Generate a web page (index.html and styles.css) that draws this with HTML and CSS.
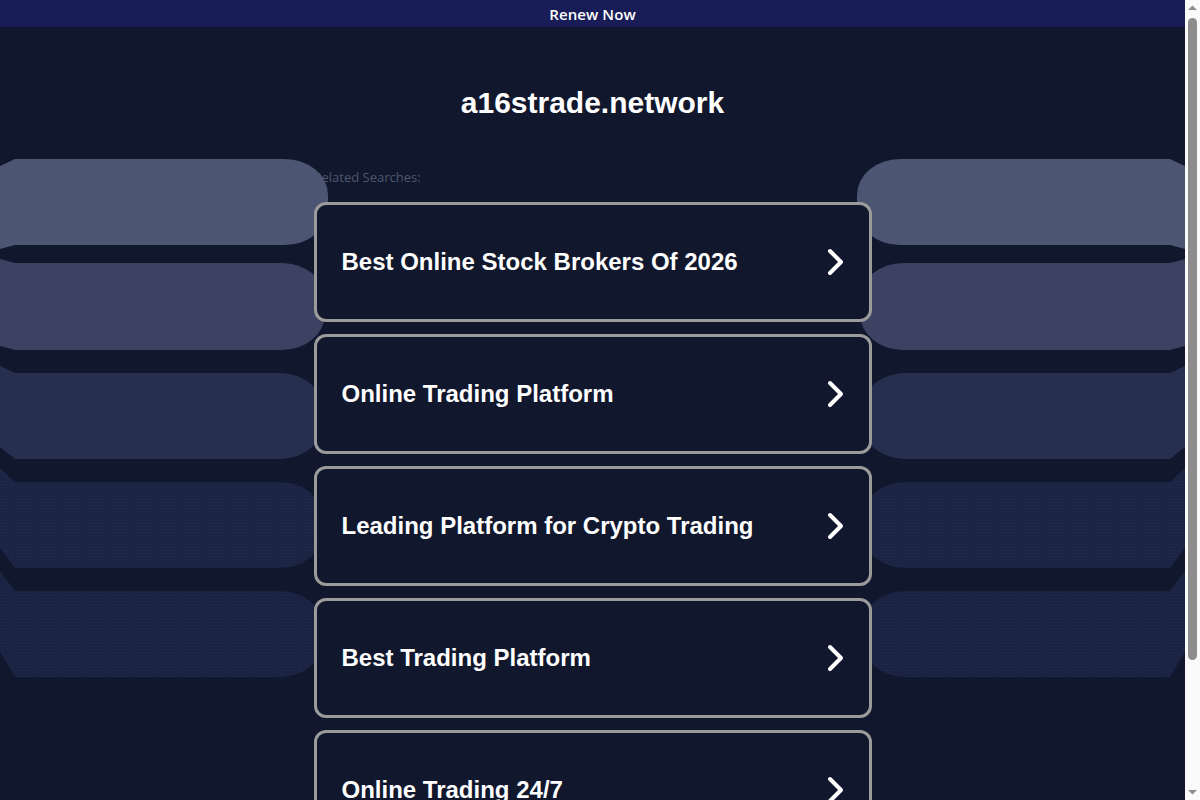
FILE: index.html
```html
<!DOCTYPE html>
<html lang="en">
<head>
<meta charset="utf-8">
<title>a16strade.network</title>
<link rel="stylesheet" href="styles.css">
</head>
<body>
<div class="renew-bar"><a class="renew-link" href="#">Renew Now</a></div>
<div class="page">
  <svg class="bg-shapes" width="1185" height="800" viewBox="0 0 1185 800" aria-hidden="true">
    <defs>
      <pattern id="dots" width="3" height="3" patternUnits="userSpaceOnUse">
        <rect x="1" y="1" width="1" height="1" fill="#2c3560" opacity="0.4"/>
      </pattern>
      <g id="side">
        <path d="M0 166 L15 159 L285 159 A43 36 0 0 1 328 195 L328 209 A43 36 0 0 1 285 245 L15 245 L0 249 Z" fill="#4c5571"/>
        <path d="M0 259 L15 263 L282 263 A43 36 0 0 1 325 299 L325 314 A43 36 0 0 1 282 350 L15 350 L0 346 Z" fill="#3b4262"/>
        <path d="M0 366 L15 373 L280 373 A43 36 0 0 1 323 409 L323 423 A43 36 0 0 1 280 459 L15 459 L0 447 Z" fill="#272f4e"/>
        <path d="M0 468 L15 482 L280 482 A43 36 0 0 1 323 518 L323 532 A43 36 0 0 1 280 568 L15 568 L0 548 Z" fill="#1c2444"/>
        <path d="M0 468 L15 482 L280 482 A43 36 0 0 1 323 518 L323 532 A43 36 0 0 1 280 568 L15 568 L0 548 Z" fill="url(#dots)"/>
        <path d="M0 571 L15 591 L280 591 A43 36 0 0 1 323 627 L323 641 A43 36 0 0 1 280 677 L15 677 L0 652 Z" fill="#1b2343"/>
        <path d="M0 571 L15 591 L280 591 A43 36 0 0 1 323 627 L323 641 A43 36 0 0 1 280 677 L15 677 L0 652 Z" fill="url(#dots)"/>
      </g>
    </defs>
    <use href="#side"/>
    <use href="#side" transform="translate(1185 0) scale(-1 1)"/>
  </svg>

  <header class="header">
    <h1 class="domain">a16strade.network</h1>
  </header>

  <main class="results">
    <div class="related-label">Related Searches:</div>
    <ul class="links">
      <li><a class="link-card" href="#"><span class="link-text">Best Online Stock Brokers Of 2026</span><svg class="chev" width="20" height="28" viewBox="0 0 20 28"><path d="M4 3 L15 14 L4 25" fill="none" stroke="#fff" stroke-width="4" stroke-linecap="round" stroke-linejoin="round"/></svg></a></li>
      <li><a class="link-card" href="#"><span class="link-text">Online Trading Platform</span><svg class="chev" width="20" height="28" viewBox="0 0 20 28"><path d="M4 3 L15 14 L4 25" fill="none" stroke="#fff" stroke-width="4" stroke-linecap="round" stroke-linejoin="round"/></svg></a></li>
      <li><a class="link-card" href="#"><span class="link-text">Leading Platform for Crypto Trading</span><svg class="chev" width="20" height="28" viewBox="0 0 20 28"><path d="M4 3 L15 14 L4 25" fill="none" stroke="#fff" stroke-width="4" stroke-linecap="round" stroke-linejoin="round"/></svg></a></li>
      <li><a class="link-card" href="#"><span class="link-text">Best Trading Platform</span><svg class="chev" width="20" height="28" viewBox="0 0 20 28"><path d="M4 3 L15 14 L4 25" fill="none" stroke="#fff" stroke-width="4" stroke-linecap="round" stroke-linejoin="round"/></svg></a></li>
      <li><a class="link-card" href="#"><span class="link-text">Online Trading 24/7</span><svg class="chev" width="20" height="28" viewBox="0 0 20 28"><path d="M4 3 L15 14 L4 25" fill="none" stroke="#fff" stroke-width="4" stroke-linecap="round" stroke-linejoin="round"/></svg></a></li>
    </ul>
  </main>
</div>

<div class="scrollbar" aria-hidden="true">
  <svg class="sb-arrow" width="15" height="15" viewBox="0 0 15 15"><path d="M3 10 L7.5 5.5 L12 10 Z" fill="#8d8d8d"/></svg>
  <div class="sb-track"><div class="sb-thumb"></div></div>
  <svg class="sb-arrow" width="15" height="15" viewBox="0 0 15 15"><path d="M3 5 L7.5 9.5 L12 5 Z" fill="#8d8d8d"/></svg>
</div>
</body>
</html>
```

FILE: styles.css
```css
html, body {
  margin: 0;
  padding: 0;
}

html {
  overflow: hidden;
}

body {
  background: #11172d;
  font-family: "Liberation Sans", Arial, sans-serif;
  color: #ffffff;
  margin-right: 15px;
}

.renew-bar {
  height: 27px;
  background: #191d57;
  display: flex;
  align-items: center;
  justify-content: center;
}

.renew-link {
  font-family: "Open Sans", "Liberation Sans", sans-serif;
  font-weight: 600;
  font-size: 15px;
  letter-spacing: 0.1px;
  color: #ffffff;
  text-decoration: none;
}

.page {
  position: relative;
  padding-bottom: 110px;
}

.bg-shapes {
  position: absolute;
  top: -27px;
  left: 0;
  z-index: 1;
  pointer-events: none;
}

.header {
  padding-top: 58px;
  text-align: center;
}

.domain {
  margin: 0;
  font-size: 30px;
  line-height: 36px;
  font-weight: 700;
  color: #ffffff;
}

.results {
  width: 558px;
  margin: 48px auto 0;
}

.related-label {
  font-family: "Open Sans", "Liberation Sans", sans-serif;
  font-size: 13px;
  font-weight: 500;
  line-height: 16px;
  color: #4f566f;
  margin-bottom: 17px;
}

.links {
  list-style: none;
  margin: 0;
  padding: 0;
  display: flex;
  flex-direction: column;
  gap: 12px;
}

.link-card {
  position: relative;
  z-index: 2;
  box-sizing: border-box;
  height: 120px;
  display: flex;
  align-items: center;
  justify-content: space-between;
  padding: 0 25px;
  border: 3px solid #9b9b9b;
  border-radius: 12px;
  background: #11172d;
  color: #ffffff;
  text-decoration: none;
}

.link-text {
  font-size: 24px;
  font-weight: 700;
  line-height: 30px;
}

.chev {
  display: block;
  flex: none;
  margin-right: -2px;
}

/* imitation of the browser's classic scrollbar, laid over the right edge */
.scrollbar {
  position: fixed;
  top: 0;
  right: 0;
  width: 15px;
  height: 100vh;
  background: #fafafa;
  display: flex;
  flex-direction: column;
  z-index: 10;
}

.sb-arrow {
  display: block;
  flex: none;
}

.sb-track {
  flex: 1;
  display: flex;
  flex-direction: column;
  padding: 3px 3px 0 3px;
}

.sb-thumb {
  height: 642px;
  background: #8d8d8d;
  border-radius: 5px;
}
```
